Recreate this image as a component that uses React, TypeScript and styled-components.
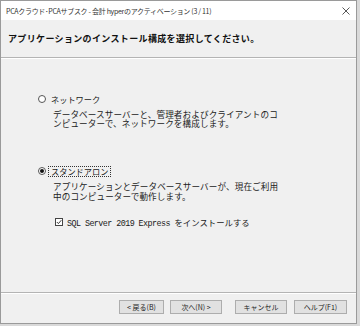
import * as React from "react";
import styled, { createGlobalStyle } from "styled-components";

const GlobalStyle = createGlobalStyle`
  html, body {
    margin: 0;
    padding: 0;
    background: #d9d9d9;
  }
  body {
    font-family: "Noto Sans CJK JP", "Noto Sans", sans-serif;
    color: #1a1a1a;
  }
`;

const Window = styled.div`
  width: 357px;
  height: 324px;
  display: flex;
  flex-direction: column;
  background: #f0f0f0;
  border: 1px solid #9a9a9a;
  box-sizing: border-box;
  overflow: hidden;
`;

const TitleBar = styled.div`
  height: 19px;
  flex: none;
  display: flex;
  align-items: center;
  justify-content: space-between;
  padding: 0 6px 0 5px;
  background: #ffffff;
`;

const TitleText = styled.span`
  font-size: 7px;
  letter-spacing: -0.3px;
  color: #333;
  white-space: nowrap;
`;

const Header = styled.div`
  height: 37px;
  flex: none;
  display: flex;
  align-items: center;
  padding: 0 7px;
  border-bottom: 1px solid #b4b4b4;
  box-shadow: 0 1px 0 #ffffff;
`;

const Heading = styled.h1`
  margin: 0;
  font-size: 9px;
  font-weight: 700;
  letter-spacing: 0.35px;
  color: #111;
`;

const Body = styled.div`
  flex: 1;
  display: flex;
  flex-direction: column;
  padding: 35px 0 0 37px;
  border-bottom: 1px solid #b4b4b4;
  box-shadow: 0 1px 0 #ffffff;
`;

const Option = styled.div<{ $gap: number }>`
  display: flex;
  flex-direction: column;
  margin-bottom: ${(p) => p.$gap}px;
`;

const OptionRow = styled.label`
  display: flex;
  align-items: center;
  gap: 3px;
  height: 12px;
`;

const Radio = styled.span<{ $checked?: boolean }>`
  width: 8px;
  height: 8px;
  box-sizing: border-box;
  border-radius: 50%;
  border: 1px solid #555;
  background: #fff;
  display: flex;
  align-items: center;
  justify-content: center;

  &::after {
    content: "";
    width: 4px;
    height: 4px;
    border-radius: 50%;
    background: ${(p) => (p.$checked ? "#111" : "transparent")};
  }
`;

const OptionLabel = styled.span<{ $focused?: boolean }>`
  font-size: 8.2px;
  line-height: 9px;
  padding: 0 2px;
  outline: ${(p) => (p.$focused ? "1px dotted #333" : "none")};
`;

const Description = styled.p`
  margin: 5px 0 0 15px;
  font-size: 8.6px;
  line-height: 9.2px;
  letter-spacing: 0.1px;
  color: #222;
`;

const CheckRow = styled.label`
  display: flex;
  align-items: center;
  gap: 4px;
  margin: 15px 0 0 17px;
  font-size: 8.4px;
`;

const CheckBox = styled.span`
  width: 8px;
  height: 8px;
  box-sizing: border-box;
  border: 1px solid #444;
  background: #fff;
  display: flex;
  align-items: center;
  justify-content: center;
`;

const Mono = styled.span`
  font-family: "Liberation Mono", monospace;
  font-size: 8.4px;
  letter-spacing: -0.55px;
`;

const Footer = styled.div`
  height: 28px;
  flex: none;
  display: flex;
  align-items: center;
  justify-content: flex-end;
  padding: 0 9px 2px 0;
`;

const Button = styled.button<{ $w: number; $gapLeft: number }>`
  width: ${(p) => p.$w}px;
  height: 14px;
  margin-left: ${(p) => p.$gapLeft}px;
  padding: 0;
  background: #e1e1e1;
  border: 1px solid #adadad;
  font-family: inherit;
  font-size: 7px;
  color: #222;
  line-height: 12px;
`;

const CloseIcon = () => (
  <svg width="8" height="8" viewBox="0 0 8 8">
    <path d="M0.5 0.5 L7.5 7.5 M7.5 0.5 L0.5 7.5" stroke="#444" strokeWidth="0.9" />
  </svg>
);

const CheckMark = () => (
  <svg width="6" height="6" viewBox="0 0 6 6">
    <path d="M0.8 3 L2.4 4.6 L5.3 1.2" stroke="#222" strokeWidth="0.9" fill="none" />
  </svg>
);

const buttons: [string, number, number][] = [
  ["< 戻る(B)", 45, 0],
  ["次へ(N) >", 52, 6],
  ["キャンセル", 52, 13],
  ["ヘルプ(F1)", 53, 7]
];

const App: React.FC = () => (
  <>
    <GlobalStyle />
    <Window>
      <TitleBar>
        <TitleText>PCAクラウド･PCAサブスク - 会計 hyperのアクティベーション (3 / 11)</TitleText>
        <CloseIcon />
      </TitleBar>
      <Header>
        <Heading>アプリケーションのインストール構成を選択してください。</Heading>
      </Header>
      <Body>
        <Option $gap={37}>
          <OptionRow>
            <Radio />
            <OptionLabel>ネットワーク</OptionLabel>
          </OptionRow>
          <Description>
            データベースサーバーと、管理者およびクライアントのコ
            <br />
            ンピューターで、ネットワークを構成します。
          </Description>
        </Option>
        <Option $gap={0}>
          <OptionRow>
            <Radio $checked />
            <OptionLabel $focused>スタンドアロン</OptionLabel>
          </OptionRow>
          <Description>
            アプリケーションとデータベースサーバーが、現在ご利用
            <br />
            中のコンピューターで動作します。
          </Description>
          <CheckRow>
            <CheckBox>
              <CheckMark />
            </CheckBox>
            <span>
              <Mono>SQL Server 2019 Express </Mono>をインストールする
            </span>
          </CheckRow>
        </Option>
      </Body>
      <Footer>
        {buttons.map(([label, w, g]) => (
          <Button key={label} $w={w} $gapLeft={g}>
            {label}
          </Button>
        ))}
      </Footer>
    </Window>
  </>
);

export default App;
